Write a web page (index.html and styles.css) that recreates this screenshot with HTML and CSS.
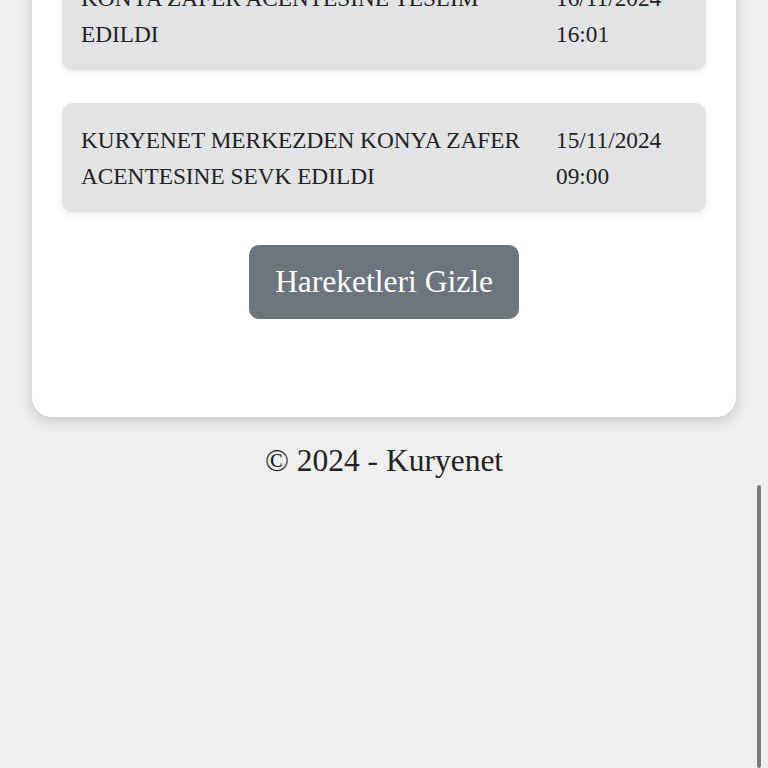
FILE: index.html
```html
<!DOCTYPE html>
<html lang="tr">
<head>
    <meta charset="UTF-8">
    <meta name="viewport" content="width=device-width, initial-scale=1.0">
    <title>Kargo Takip - Kuryenet</title>
    <link rel="stylesheet" href="styles.css">
</head>
<body>
    <main class="track-card">
        <div class="movements">
            <div class="movement">
                <span class="movement-text">KONYA ZAFER ACENTESINE TESLIM EDILDI</span>
                <span class="movement-date">16/11/2024 16:01</span>
            </div>
            <div class="movement">
                <span class="movement-text">KURYENET MERKEZDEN KONYA ZAFER ACENTESINE SEVK EDILDI</span>
                <span class="movement-date">15/11/2024 09:00</span>
            </div>
        </div>

        <div class="actions">
            <button class="toggle-btn" id="toggle-movements">Hareketleri Gizle</button>
        </div>
    </main>

    <footer class="footer">&copy; 2024 - Kuryenet</footer>

    <!-- mobile overlay scrollbar -->
    <div class="scroll-thumb"></div>
</body>
</html>
```

FILE: styles.css
```css
body {
    font-family: "Liberation Serif", "Times New Roman", serif;
    margin: 0;
    padding: 0;
    background-color: #efefef;
    color: #222;
    overflow: hidden;
}

/* Card, scrolled so its top is out of view */
.track-card {
    margin: -69px 32px 0;
    padding: 30px 30px 98px;
    background: #fff;
    border-radius: 20px;
    box-shadow: 0 4px 14px rgba(0, 0, 0, 0.18);
}

.movements {
    display: flex;
    flex-direction: column;
    gap: 33px;
}

.movement {
    display: flex;
    gap: 12px;
    padding: 19px 19px 18px;
    background-color: #e2e3e5;
    border-radius: 10px;
    box-shadow: 0 3px 6px rgba(0, 0, 0, 0.08);
    font-size: 23.3px;
    line-height: 36px;
}

.movement-text {
    flex: 1;
}

.movement-date {
    width: 131px;
}

.actions {
    display: flex;
    justify-content: center;
    margin-top: 33px;
}

.toggle-btn {
    font-family: inherit;
    font-size: 31.5px;
    line-height: 50px;
    padding: 12px 26px;
    color: #fff;
    background-color: #6c757d;
    border: none;
    border-radius: 10px;
    cursor: pointer;
}

.footer {
    margin-top: 20px;
    text-align: center;
    font-size: 31.5px;
    line-height: 48px;
    color: #222;
}

.scroll-thumb {
    position: fixed;
    right: 7px;
    top: 485px;
    bottom: 0;
    width: 4px;
    border-radius: 2px;
    background-color: #7b7b7b;
}
```
